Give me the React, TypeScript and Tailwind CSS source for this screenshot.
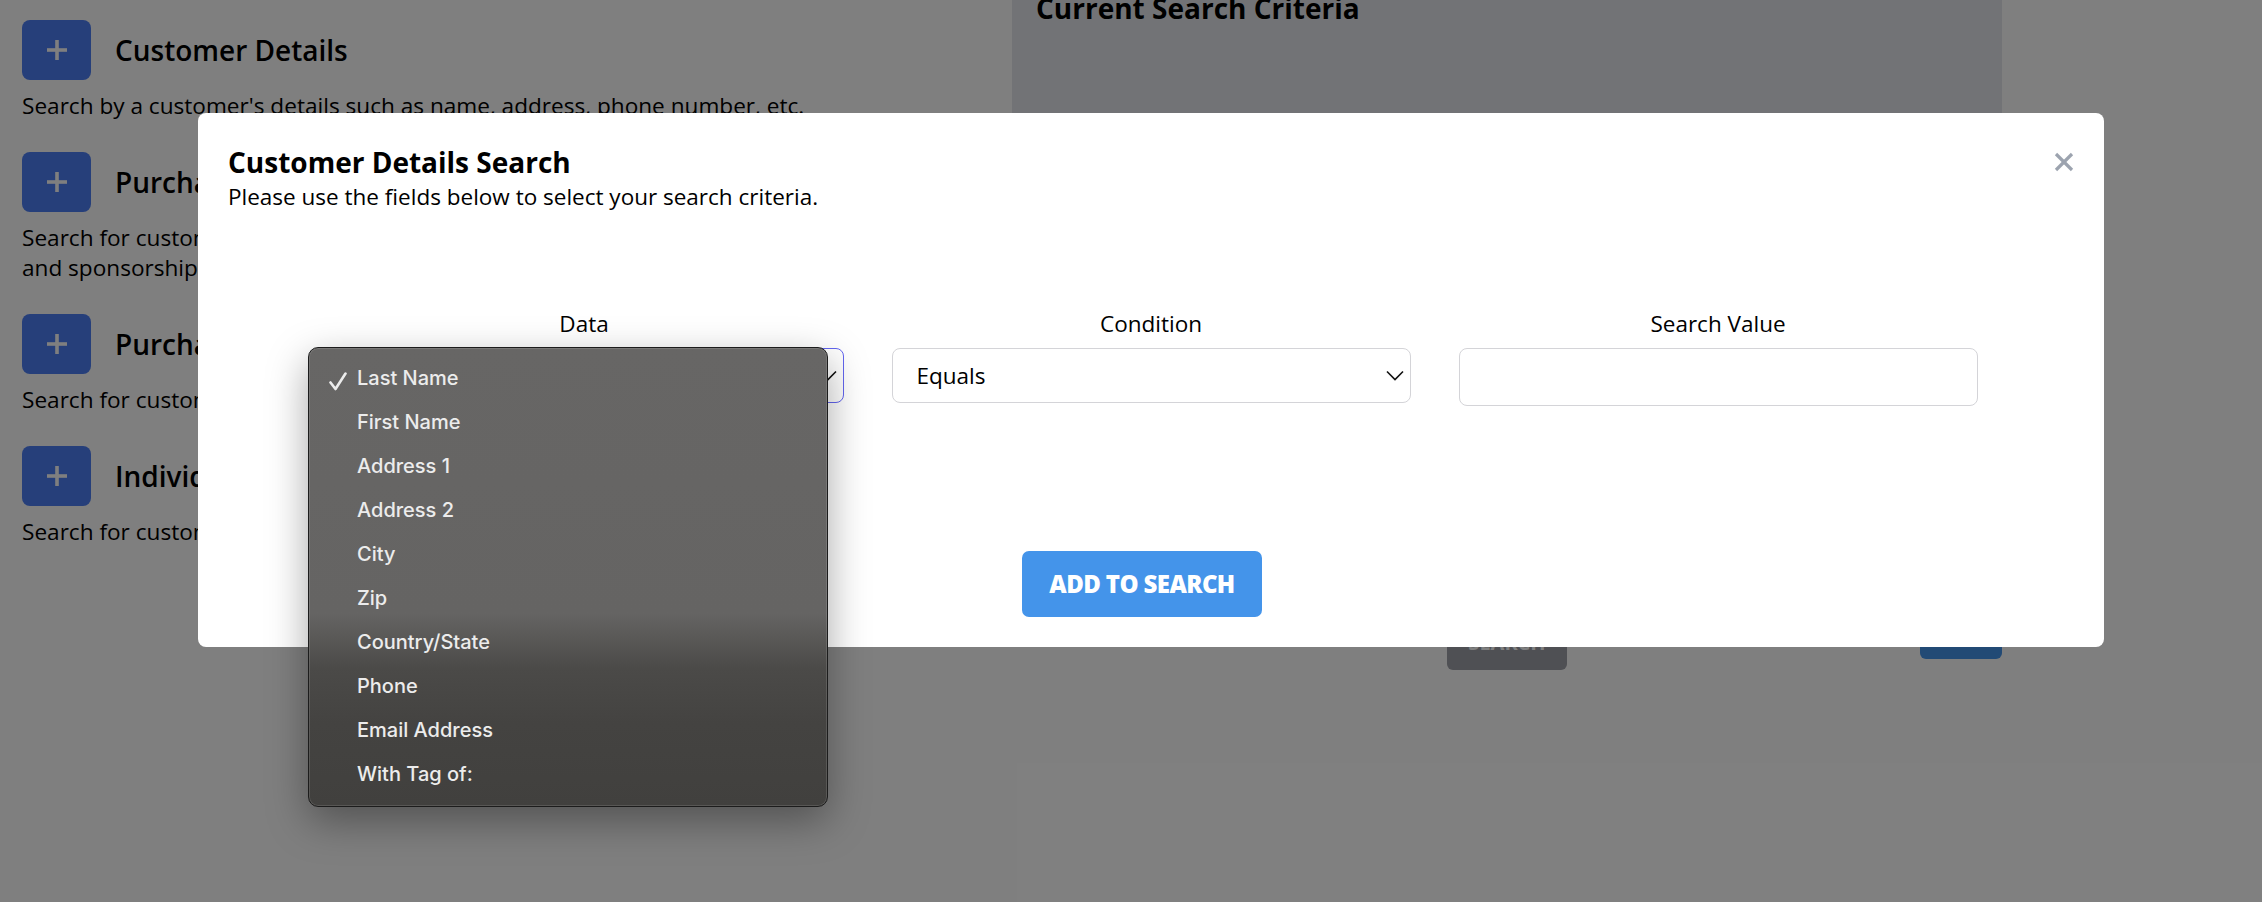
import React from "react";

const sections = [
  {
    title: "Customer Details",
    desc: ["Search by a customer's details such as name, address, phone number, etc."],
  },
  {
    title: "Purchase History",
    desc: [
      "Search for customers based on their purchases of tickets, memberships, donations",
      "and sponsorships.",
    ],
  },
  {
    title: "Purchase Dates",
    desc: ["Search for customers by the date range of their purchases."],
  },
  {
    title: "Individual Events",
    desc: ["Search for customers who attended specific events or performances."],
  },
];

const options = [
  "Last Name",
  "First Name",
  "Address 1",
  "Address 2",
  "City",
  "Zip",
  "Country/State",
  "Phone",
  "Email Address",
  "With Tag of:",
];

function Plus() {
  return (
    <svg width="22" height="22" viewBox="0 0 22 22">
      <line x1="11" y1="1" x2="11" y2="21" stroke="white" strokeWidth="3.6" />
      <line x1="1" y1="11" x2="21" y2="11" stroke="white" strokeWidth="3.6" />
    </svg>
  );
}

function Chevron() {
  return (
    <svg width="18" height="11" viewBox="0 0 18 11" fill="none">
      <path d="M1 1.5 L9 9.5 L17 1.5" stroke="#111" strokeWidth="1.6" />
    </svg>
  );
}

export default function App() {
  return (
    <div className="relative h-[902px] w-[2262px] overflow-hidden bg-white font-['Open_Sans',sans-serif] text-black">
      {/* Underlying page */}
      <div className="mt-[-34px] flex">
        <div className="flex w-[1012px] flex-col gap-[31px] pl-[22px] pt-[54px]">
          {sections.map((s) => (
            <div key={s.title} className="flex flex-col">
              <div className="flex items-center gap-[24px]">
                <div className="flex h-[60px] w-[69px] items-center justify-center rounded-[8px] bg-[#4c7ef4]">
                  <Plus />
                </div>
                <h2 className="text-[28px] font-semibold leading-[36px]">{s.title}</h2>
              </div>
              <div className="mt-[11px] whitespace-nowrap text-[22.6px] leading-[30px]">
                {s.desc.map((d) => (
                  <p key={d}>{d}</p>
                ))}
              </div>
            </div>
          ))}
        </div>
        <div className="flex w-[990px] flex-col">
          <div className="h-[624px] bg-[#e5e7ec] pl-[24px] pt-[24px]">
            <h2 className="text-[28px] font-bold leading-[36px]">Current Search Criteria</h2>
          </div>
          <div className="mt-[22px] grid grid-cols-3 items-start">
            <div />
            <div className="flex justify-center">
              <button className="mt-[4px] h-[54px] w-[120px] rounded-[6px] bg-[#9ea0a8] text-[20px] font-bold text-white">
                SEARCH
              </button>
            </div>
            <div className="flex justify-end">
              <button className="h-[47px] w-[82px] rounded-[6px] bg-[#4494ea] text-[20px] font-bold text-white">
                GO
              </button>
            </div>
          </div>
        </div>
      </div>

      {/* Overlay */}
      <div className="absolute inset-0 bg-black/50" />

      {/* Modal */}
      <div className="absolute left-[198px] top-[113px] h-[534px] w-[1906px] rounded-[8px] bg-white">
        <button className="absolute right-[30px] top-[39px] h-[20px] w-[20px]">
          <svg width="20" height="20" viewBox="0 0 20 20">
            <line x1="2" y1="2" x2="18" y2="18" stroke="#9ca3af" strokeWidth="3.2" />
            <line x1="18" y1="2" x2="2" y2="18" stroke="#9ca3af" strokeWidth="3.2" />
          </svg>
        </button>
        <div className="pl-[30px] pt-[31px]">
          <h2 className="text-[28px] font-bold leading-[36px]">Customer Details Search</h2>
          <p className="mt-[2px] text-[22.5px] leading-[30px]">
            Please use the fields below to select your search criteria.
          </p>
        </div>
        <div className="mx-auto mt-[96px] grid w-[1653px] grid-cols-3 gap-x-[48px]">
          <div className="flex flex-col">
            <label className="mb-[8px] text-center text-[22.5px] font-medium leading-[32px]">Data</label>
            <div className="flex h-[55px] items-center justify-between rounded-[8px] border border-[#6366f1] pl-[24px] pr-[6px] text-[22.5px]">
              <span>Last Name</span>
              <Chevron />
            </div>
          </div>
          <div className="flex flex-col">
            <label className="mb-[8px] text-center text-[22.5px] font-medium leading-[32px]">Condition</label>
            <div className="flex h-[55px] items-center justify-between rounded-[8px] border border-[#d4d4d8] pl-[24px] pr-[6px] text-[22.5px]">
              <span>Equals</span>
              <Chevron />
            </div>
          </div>
          <div className="flex flex-col">
            <label className="mb-[8px] text-center text-[22.5px] font-medium leading-[32px]">Search Value</label>
            <input
              className="h-[58px] rounded-[8px] border border-[#d4d4d8] px-[24px] text-[22.5px] outline-none"
              defaultValue=""
            />
          </div>
        </div>
        <div className="mt-[145px] flex justify-center">
          <button className="mr-[18px] h-[66px] w-[240px] rounded-[7px] bg-[#4494ea] text-[24px] font-extrabold tracking-[-0.6px] text-white">
            ADD TO SEARCH
          </button>
        </div>
      </div>

      {/* Native select popup */}
      <div className="absolute left-[308px] top-[347px] h-[460px] w-[520px] overflow-hidden rounded-[10px] border border-[#1c1c1c] bg-[linear-gradient(180deg,#676665_0%,#656463_58%,#4b4a48_70%,#444341_82%,#41403e_100%)] pt-[8px] font-['Inter',sans-serif] shadow-[inset_0_0_0_1px_rgba(255,255,255,0.12),0_14px_40px_rgba(0,0,0,0.35)]">
        {options.map((o, i) => (
          <div key={o} className="relative flex h-[44px] items-center pl-[48px] text-[20px] font-medium text-[#ececec]">
            {i === 0 && (
              <svg className="absolute left-[20px] top-[16px]" width="18" height="19" viewBox="0 0 18 19" fill="none">
                <path d="M1.5 10.5 L6.5 17 L16.5 1.5" stroke="#ececec" strokeWidth="2.6" strokeLinecap="round" strokeLinejoin="round" />
              </svg>
            )}
            {o}
          </div>
        ))}
      </div>
    </div>
  );
}
